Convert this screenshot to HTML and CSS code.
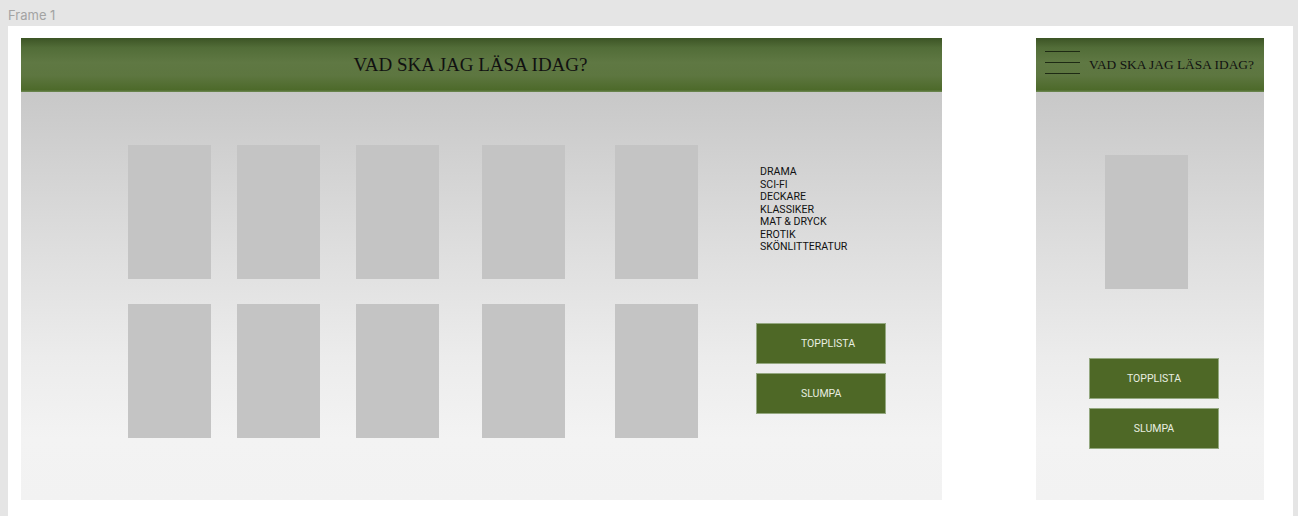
FILE: index.html
```html
<!DOCTYPE html>
<html lang="sv">
<head>
<meta charset="utf-8">
<title>Frame 1</title>
<link rel="stylesheet" href="styles.css">
</head>
<body>
<div class="label">Frame 1</div>
<div class="frame">
  <section class="desktop">
    <header class="head head-desktop">
      <h1 class="title">VAD SKA JAG LÄSA IDAG?</h1>
    </header>
    <div class="body body-desktop">
      <div class="books">
        <div class="row">
          <div class="book"></div>
          <div class="book g2"></div>
          <div class="book g3"></div>
          <div class="book g4"></div>
          <div class="book g5"></div>
        </div>
        <div class="row">
          <div class="book"></div>
          <div class="book g2"></div>
          <div class="book g3"></div>
          <div class="book g4"></div>
          <div class="book g5"></div>
        </div>
      </div>
      <div class="side">
        <ul class="genres">
          <li>DRAMA</li>
          <li>SCI-FI</li>
          <li>DECKARE</li>
          <li>KLASSIKER</li>
          <li>MAT &amp; DRYCK</li>
          <li>EROTIK</li>
          <li>SKÖNLITTERATUR</li>
        </ul>
        <div class="buttons">
          <div class="btn btn-left">TOPPLISTA</div>
          <div class="btn btn-left">SLUMPA</div>
        </div>
      </div>
    </div>
  </section>
  <section class="mobile">
    <header class="head head-mobile">
      <div class="burger"><span></span><span></span><span></span></div>
      <h1 class="title title-small">VAD SKA JAG LÄSA IDAG?</h1>
    </header>
    <div class="body body-mobile">
      <div class="book"></div>
      <div class="buttons buttons-mobile">
        <div class="btn">TOPPLISTA</div>
        <div class="btn">SLUMPA</div>
      </div>
    </div>
  </section>
</div>
</body>
</html>
```
FILE: styles.css
```css
* { box-sizing: border-box; }
html, body { margin: 0; padding: 0; }
body {
  background: #e5e5e5;
  width: 1298px;
  height: 516px;
  overflow: hidden;
  font-family: Roboto, "Liberation Sans", sans-serif;
}
.label {
  height: 26px;
  padding: 7px 0 0 8px;
  font-family: Inter, Roboto, sans-serif;
  font-size: 13px;
  line-height: 16px;
  color: #a3a3a3;
}
.frame {
  margin-left: 8px;
  width: 1285px;
  height: 490px;
  background: #ffffff;
  display: flex;
  align-items: flex-start;
  padding: 12px 0 0 13px;
}
.desktop { width: 921px; }
.mobile { width: 228px; margin-left: 94px; }

.head {
  height: 54px;
  background: linear-gradient(to bottom, #3c5425 0%, #526d38 18%, #5f7843 45%, #5d7640 70%, #4d6a2a 96%, #6f8a55 100%);
  display: flex;
  align-items: center;
}
.head-desktop { justify-content: center; padding-right: 22px; }
.head-mobile { padding-left: 9px; }
.title {
  margin: 0;
  font-family: "Liberation Serif", "DejaVu Serif", serif;
  font-weight: normal;
  font-size: 19px;
  color: #111;
  white-space: nowrap;
}
.title-small { font-size: 13.4px; margin-left: 9px; }
.burger {
  width: 35px;
  display: flex;
  flex-direction: column;
  gap: 10px;
  margin-bottom: 6px;
}
.burger span {
  display: block;
  height: 1px;
  background: #1e2a14;
}

.body {
  height: 408px;
  background: linear-gradient(to bottom, #c8c8c8 0%, #dcdcdc 35%, #ececec 65%, #f3f3f3 85%, #f2f2f2 100%);
}
.body-desktop {
  display: flex;
  padding: 53px 0 0 107px;
}
.books { display: flex; flex-direction: column; gap: 25px; }
.row { display: flex; }
.book { width: 83px; height: 134px; background: #c4c4c4; }
.g2 { margin-left: 26px; }
.g3 { margin-left: 36px; }
.g4 { margin-left: 43px; }
.g5 { margin-left: 50px; }

.side {
  margin-left: 58px;
  height: 293px;
  display: flex;
  flex-direction: column;
}
.genres {
  list-style: none;
  margin: 0;
  padding: 21px 0 0 4px;
  font-size: 10.6px;
  line-height: 12.5px;
  color: #111;
}
.buttons { display: flex; flex-direction: column; gap: 9px; }
.side .buttons { margin-top: auto; margin-bottom: 24px; }
.btn {
  width: 130px;
  height: 41px;
  background: #4e6826;
  border: 1px solid #94a880;
  color: #e8eee0;
  font-size: 10.5px;
  display: flex;
  align-items: center;
  justify-content: center;
}
.btn-left { justify-content: flex-start; padding-left: 44px; }

.body-mobile {
  padding: 63px 0 0 0;
  display: flex;
  flex-direction: column;
}
.body-mobile .book { margin-left: 69px; }
.buttons-mobile { margin: 69px 0 0 53px; }
```
